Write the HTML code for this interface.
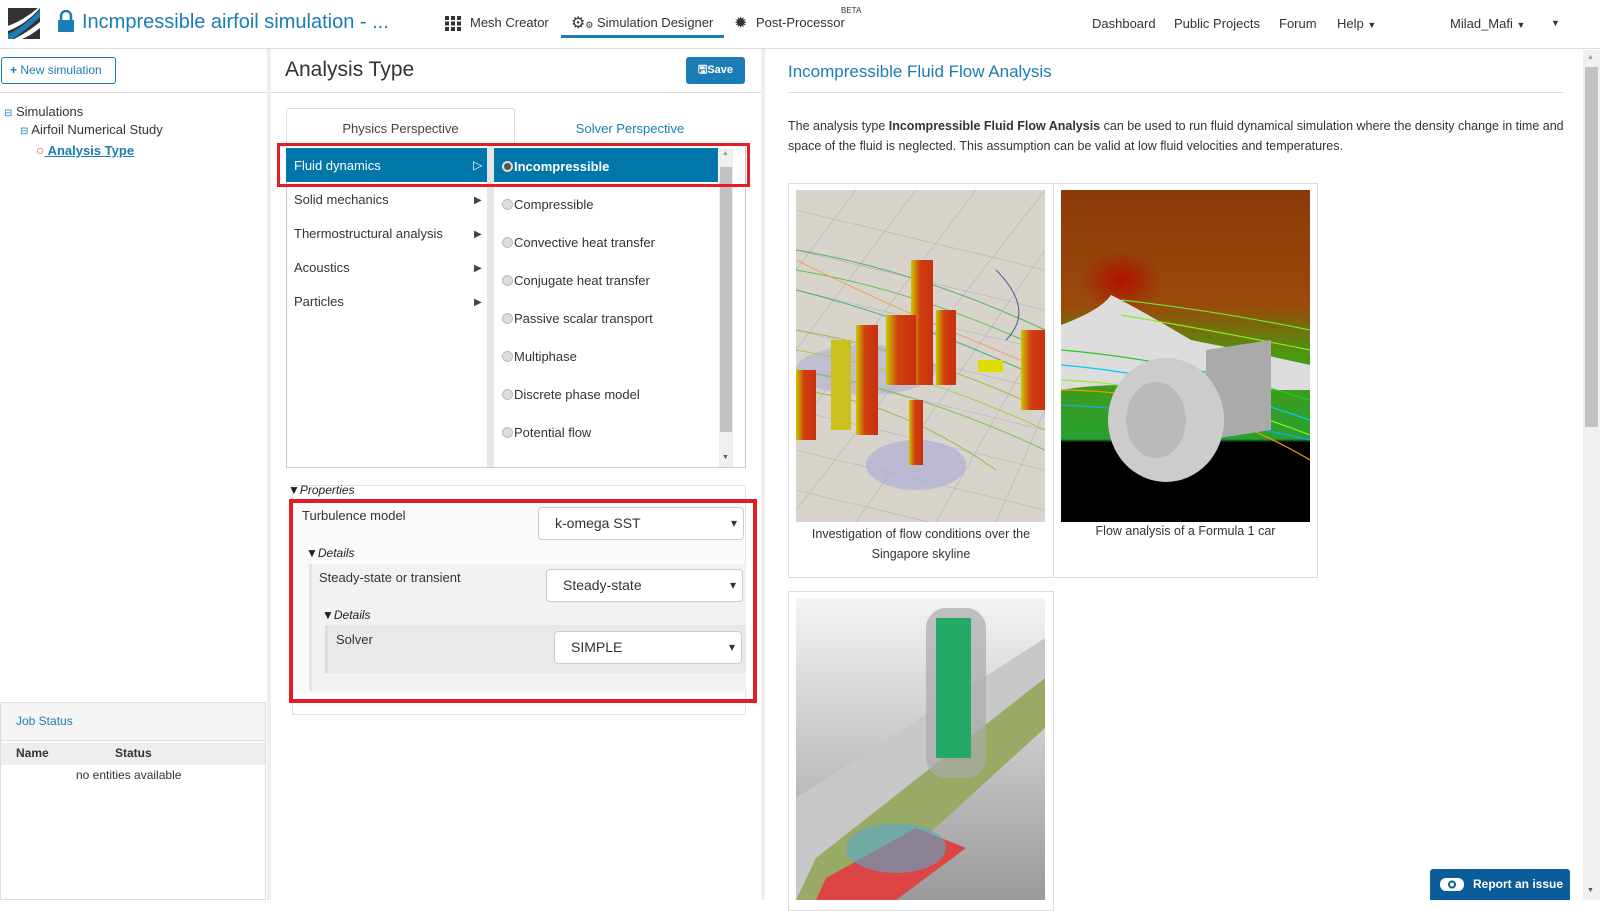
<!DOCTYPE html>
<html><head><meta charset="utf-8"><style>
*{box-sizing:border-box;margin:0;padding:0}
body{width:1600px;height:900px;position:relative;overflow:hidden;background:#fff;font-family:"Liberation Sans",sans-serif;color:#333;font-size:13px}
.a{position:absolute;white-space:nowrap}
.blue{color:#1b7db5}
.sel{position:absolute;border:1px solid #ccc;border-radius:4px;background:#fff;font-size:14px;padding-left:16px;line-height:30px;color:#333}
.sel:after{content:"▾";position:absolute;right:6px;top:0;font-size:12px;color:#333}
.rad{display:inline-block;width:11px;height:11px;border-radius:50%;background:#ddd;border:1px solid #bbb;vertical-align:-1px;margin-right:1px}
.li{position:absolute;left:502px;font-size:13px;color:#333}
.pl{position:absolute;left:294px;font-size:13px;color:#333}
.ar{position:absolute;left:474px;font-size:10px;color:#444}
</style></head><body>
<div class="a" style="left:0;top:0;width:1600px;height:49px;border-bottom:1px solid #ddd;background:#fff"></div>
<svg class="a" style="left:8px;top:8px" width="32" height="31"><rect width="32" height="31" fill="#333"/><path d="M0 26 Q14 20 32 2 L32 9 Q16 24 4 31 L0 31Z" fill="#1b7db5"/><path d="M6 31 Q20 24 32 14 L32 20 Q22 28 14 31Z" fill="#fff"/><path d="M0 18 Q16 12 30 0 L32 0 Q18 16 0 23Z" fill="#fff"/></svg>
<svg class="a" style="left:57px;top:10px" width="18" height="22"><path d="M4 10 V6 a5 5 0 0 1 10 0 V10" stroke="#1b7db5" stroke-width="2.5" fill="none"/><rect x="1" y="10" width="16" height="12" rx="1" fill="#1b7db5"/></svg>
<div class="a blue" style="left:82px;top:11px;font-size:20px">Incmpressible airfoil simulation - ...</div>
<svg class="a" style="left:445px;top:16px" width="16" height="15" fill="#333"><rect x="0" y="0" width="4" height="4"/><rect x="6" y="0" width="4" height="4"/><rect x="12" y="0" width="4" height="4"/><rect x="0" y="5.5" width="4" height="4"/><rect x="6" y="5.5" width="4" height="4"/><rect x="12" y="5.5" width="4" height="4"/><rect x="0" y="11" width="4" height="4"/><rect x="6" y="11" width="4" height="4"/><rect x="12" y="11" width="4" height="4"/></svg>
<div class="a" style="left:470px;top:15px;font-size:13px">Mesh Creator</div>
<div class="a" style="left:571px;top:13px;font-size:16px;color:#333">⚙<span style="font-size:9px">⚙</span></div>
<div class="a" style="left:597px;top:15px;font-size:13px">Simulation Designer</div>
<div class="a" style="left:561px;top:35px;width:163px;height:3px;background:#1b7db5"></div>
<div class="a" style="left:734px;top:13px;font-size:16px;color:#333">✹</div>
<div class="a" style="left:756px;top:15px;font-size:13px">Post-Processor</div>
<div class="a" style="left:841px;top:6px;font-size:8px">BETA</div>
<div class="a" style="left:1092px;top:16px;font-size:13px">Dashboard</div>
<div class="a" style="left:1174px;top:16px;font-size:13px">Public Projects</div>
<div class="a" style="left:1279px;top:16px;font-size:13px">Forum</div>
<div class="a" style="left:1337px;top:16px;font-size:13px">Help <span style="font-size:9px">▼</span></div>
<div class="a" style="left:1450px;top:16px;font-size:13px">Milad_Mafi <span style="font-size:9px">▼</span></div>
<div class="a" style="left:1551px;top:18px;font-size:9px">▼</div>
<div class="a" style="left:267px;top:49px;width:4px;height:851px;background:#eee"></div>
<div class="a" style="left:761px;top:49px;width:4px;height:851px;background:#eee"></div>
<div class="a blue" style="left:1px;top:57px;width:115px;height:27px;border:1px solid #1b7db5;border-radius:3px;font-size:12px;line-height:25px;padding-left:8px"><b>+</b> New simulation</div>
<div class="a" style="left:0;top:92px;width:267px;height:1px;background:#ddd"></div>
<div class="a" style="left:4px;top:104px;font-size:13px"><span class="blue" style="font-size:10px">⊟</span> Simulations</div>
<div class="a" style="left:20px;top:122px;font-size:13px"><span class="blue" style="font-size:10px">⊟</span> Airfoil Numerical Study</div>
<div class="a" style="left:36px;top:142px;font-size:13px"><span style="color:#e8502a;font-size:14px">○</span><span class="blue" style="text-decoration:underline;font-weight:bold"> Analysis Type</span></div>
<div class="a" style="left:0;top:702px;width:266px;height:198px;border:1px solid #ddd"></div>
<div class="a" style="left:1px;top:703px;width:264px;height:38px;background:#f5f5f5;border-bottom:1px solid #ddd"></div>
<div class="a blue" style="left:16px;top:714px;font-size:12px">Job Status</div>
<div class="a" style="left:1px;top:743px;width:264px;height:22px;background:#eee"></div>
<div class="a" style="left:16px;top:746px;font-size:12px;font-weight:bold">Name</div>
<div class="a" style="left:115px;top:746px;font-size:12px;font-weight:bold">Status</div>
<div class="a" style="left:76px;top:768px;font-size:12px">no entities available</div>
<div class="a" style="left:285px;top:58px;font-size:21px;color:#333">Analysis Type</div>
<div class="a" style="left:686px;top:57px;width:59px;height:27px;background:#1b7db5;border-radius:3px;color:#fff;font-size:11px;font-weight:bold;line-height:27px;text-align:center">🖫Save</div>
<div class="a" style="left:271px;top:92px;width:490px;height:1px;background:#ddd"></div>
<div class="a" style="left:286px;top:108px;width:229px;height:36px;border:1px solid #ddd;border-bottom:none;border-radius:3px 3px 0 0;background:#fff"></div>
<div class="a" style="left:286px;top:121px;width:229px;text-align:center;font-size:13px;color:#444">Physics Perspective</div>
<div class="a blue" style="left:515px;top:121px;width:230px;text-align:center;font-size:13px">Solver Perspective</div>
<div class="a" style="left:286px;top:143px;width:460px;height:325px;border:1px solid #ccc;background:#fff"></div>
<div class="a" style="left:487px;top:144px;width:7px;height:323px;background:#e6e6e6"></div>
<div class="a" style="left:719px;top:148px;width:14px;height:319px;background:#f0f0f0"></div>
<div class="a" style="left:720px;top:167px;width:12px;height:265px;background:#c2c2c2"></div>
<div class="a" style="left:722px;top:150px;font-size:7px;color:#999">▲</div>
<div class="a" style="left:722px;top:454px;font-size:7px;color:#555">▼</div>
<div class="a" style="left:286px;top:148px;width:201px;height:34px;background:#0077a8"></div>
<div class="a" style="left:294px;top:158px;color:#fff;font-size:13px">Fluid dynamics</div>
<div class="a" style="left:473px;top:158px;color:#fff;font-size:12px">▷</div>
<div class="a" style="left:494px;top:148px;width:224px;height:34px;background:#0077a8"></div>
<div class="a" style="left:502px;top:159px;color:#fff;font-size:13px;font-weight:bold"><span class="rad" style="background:#555;border:2px solid #ddd"></span>Incompressible</div>
<div class="pl" style="top:192px">Solid mechanics</div><div class="ar" style="top:195px">▶</div>
<div class="pl" style="top:226px">Thermostructural analysis</div><div class="ar" style="top:229px">▶</div>
<div class="pl" style="top:260px">Acoustics</div><div class="ar" style="top:263px">▶</div>
<div class="pl" style="top:294px">Particles</div><div class="ar" style="top:297px">▶</div>
<div class="li" style="top:197px"><span class="rad"></span>Compressible</div>
<div class="li" style="top:235px"><span class="rad"></span>Convective heat transfer</div>
<div class="li" style="top:273px"><span class="rad"></span>Conjugate heat transfer</div>
<div class="li" style="top:311px"><span class="rad"></span>Passive scalar transport</div>
<div class="li" style="top:349px"><span class="rad"></span>Multiphase</div>
<div class="li" style="top:387px"><span class="rad"></span>Discrete phase model</div>
<div class="li" style="top:425px"><span class="rad"></span>Potential flow</div>
<div class="a" style="left:277px;top:143px;width:473px;height:44px;border:3px solid #e41c24"></div>
<div class="a" style="left:292px;top:485px;width:454px;height:230px;border:1px solid #e2e2e2;background:#fff"></div>
<div class="a" style="left:288px;top:483px;font-size:12px;font-style:italic;color:#222">▼Properties</div>
<div class="a" style="left:293px;top:503px;width:452px;height:190px;background:#fafafa"></div>
<div class="a" style="left:302px;top:508px;font-size:13px">Turbulence model</div>
<div class="sel" style="left:538px;top:507px;width:206px;height:33px">k-omega SST</div>
<div class="a" style="left:306px;top:546px;font-size:12px;font-style:italic;color:#222">▼Details</div>
<div class="a" style="left:309px;top:564px;width:437px;height:127px;background:#f2f2f2;border-left:3px solid #e4e4e4"></div>
<div class="a" style="left:319px;top:570px;font-size:13px">Steady-state or transient</div>
<div class="sel" style="left:546px;top:569px;width:197px;height:33px">Steady-state</div>
<div class="a" style="left:322px;top:608px;font-size:12px;font-style:italic;color:#222">▼Details</div>
<div class="a" style="left:325px;top:625px;width:421px;height:48px;background:#e9e9e9;border-left:3px solid #dedede"></div>
<div class="a" style="left:336px;top:632px;font-size:13px">Solver</div>
<div class="sel" style="left:554px;top:631px;width:188px;height:33px">SIMPLE</div>
<div class="a" style="left:289px;top:499px;width:468px;height:204px;border:4px solid #e41c24"></div>
<div class="a blue" style="left:788px;top:62px;font-size:17px">Incompressible Fluid Flow Analysis</div>
<div class="a" style="left:788px;top:92px;width:775px;height:1px;background:#ddd"></div>
<div class="a" style="left:788px;top:116px;font-size:12.5px;line-height:20px;width:780px;white-space:normal">The analysis type <b>Incompressible Fluid Flow Analysis</b> can be used to run fluid dynamical simulation where the density change in time and space of the fluid is neglected. This assumption can be valid at low fluid velocities and temperatures.</div>
<div class="a" style="left:788px;top:183px;width:266px;height:395px;border:1px solid #ddd"></div>
<div class="a" style="left:1053px;top:183px;width:265px;height:395px;border:1px solid #ddd"></div>
<div class="a" style="left:788px;top:591px;width:266px;height:320px;border:1px solid #ddd"></div>
<svg class="a" style="left:796px;top:190px" width="249" height="332">
<defs><linearGradient id="b" x1="0" x2="1"><stop offset="0" stop-color="#c9c900"/><stop offset=".4" stop-color="#d04010"/><stop offset="1" stop-color="#c83010"/></linearGradient></defs>
<rect width="249" height="332" fill="#d8d4cb"/>
<g stroke="#a9a6c8" stroke-width=".6" opacity=".8"><path d="M0 20 L249 80 M0 60 L249 120 M0 100 L249 160 M0 140 L249 200 M0 180 L249 240 M0 220 L249 280 M0 260 L249 320 M0 300 L249 360 M60 0 L0 80 M120 0 L0 160 M180 0 L0 240 M249 0 L0 320 M249 60 L60 332 M249 140 L140 332 M249 220 L200 332"/></g>
<ellipse cx="120" cy="275" rx="50" ry="25" fill="#aaa8d8" opacity=".6"/><ellipse cx="70" cy="180" rx="70" ry="25" fill="#aaa8d8" opacity=".5"/>
<g fill="none" stroke-width="1" opacity=".8"><path d="M0 60 Q120 80 249 140" stroke="#3a4"/><path d="M0 80 Q120 100 249 160" stroke="#4b3"/><path d="M0 100 Q120 130 249 190" stroke="#2a6"/><path d="M0 140 Q120 160 249 220" stroke="#8b2"/><path d="M0 160 Q120 180 249 240" stroke="#9c3"/><path d="M0 180 Q120 200 249 260" stroke="#6b3"/><path d="M0 200 Q100 210 200 280" stroke="#7b2"/><path d="M0 70 Q100 120 249 180" stroke="#e94"/><path d="M200 80 Q240 120 210 150" stroke="#248"/></g>
<rect x="115" y="70" width="22" height="125" fill="url(#b)"/><rect x="90" y="125" width="30" height="70" fill="url(#b)"/><rect x="140" y="120" width="20" height="75" fill="url(#b)"/><rect x="60" y="135" width="22" height="110" fill="url(#b)"/><rect x="35" y="150" width="20" height="90" fill="#ccc020"/><rect x="0" y="180" width="20" height="70" fill="url(#b)"/><rect x="113" y="210" width="14" height="65" fill="url(#b)"/><rect x="225" y="140" width="24" height="80" fill="url(#b)"/><rect x="182" y="170" width="25" height="12" fill="#dd0"/>
</svg>
<svg class="a" style="left:1061px;top:190px" width="249" height="332">
<defs><linearGradient id="r" x1="0" y1="0" x2="0" y2="1"><stop offset="0" stop-color="#8a3a08"/><stop offset=".35" stop-color="#9a4a0a"/><stop offset=".5" stop-color="#4a9a10"/><stop offset=".75" stop-color="#28a030"/><stop offset=".76" stop-color="#000"/><stop offset="1" stop-color="#000"/></linearGradient><radialGradient id="hot" cx=".5" cy=".5" r=".5"><stop offset="0" stop-color="#b01000"/><stop offset="1" stop-color="#b01000" stop-opacity="0"/></radialGradient></defs>
<rect width="249" height="332" fill="url(#r)"/>
<ellipse cx="60" cy="90" rx="40" ry="30" fill="url(#hot)"/>
<path d="M0 135 Q40 120 50 105 Q80 120 130 150 L180 160 L249 175 L249 200 L120 200 Q60 190 0 200Z" fill="#ddd"/>
<g fill="none" stroke-width="1.2"><path d="M0 160 Q120 170 249 210" stroke="#2c2"/><path d="M0 175 Q120 185 249 230" stroke="#0cf"/><path d="M0 190 Q120 195 249 245" stroke="#9e2"/><path d="M0 200 Q130 200 249 270" stroke="#e90"/><path d="M60 110 Q150 120 249 140" stroke="#6e3"/><path d="M60 125 Q150 140 249 160" stroke="#8e2"/><path d="M0 215 Q120 220 249 250" stroke="#1ae"/></g>
<polygon points="145,160 210,150 210,240 145,250" fill="#aaa"/>
<ellipse cx="105" cy="230" rx="58" ry="62" fill="#ccc"/><ellipse cx="95" cy="230" rx="30" ry="38" fill="#bbb"/>
</svg>
<svg class="a" style="left:796px;top:598px" width="249" height="302">
<defs><linearGradient id="g3" x1="0" y1="0" x2="0" y2="1"><stop offset="0" stop-color="#f4f4f4"/><stop offset="1" stop-color="#9a9a9a"/></linearGradient></defs>
<rect width="249" height="302" fill="url(#g3)"/>
<polygon points="0,200 249,40 249,130 20,302 0,302" fill="#c8c8c8"/>
<polygon points="20,260 249,80 249,130 60,302 0,302" fill="#9a6"/>
<polygon points="30,280 120,230 170,250 100,302 20,302" fill="#d44"/>
<ellipse cx="100" cy="250" rx="50" ry="25" fill="#5ac" opacity=".6"/>
<rect x="130" y="10" width="60" height="170" rx="20" fill="#aaa" opacity=".7"/>
<rect x="140" y="20" width="35" height="140" fill="#2a6"/>
</svg>
<div class="a" style="left:788px;top:524px;width:266px;text-align:center;font-size:12.5px;line-height:20px;white-space:normal">Investigation of flow conditions over the Singapore skyline</div>
<div class="a" style="left:1053px;top:524px;width:265px;text-align:center;font-size:12.5px">Flow analysis of a Formula 1 car</div>
<div class="a" style="left:1583px;top:50px;width:17px;height:850px;background:#f0f0f0"></div>
<div class="a" style="left:1585px;top:67px;width:13px;height:360px;background:#c2c2c2"></div>
<div class="a" style="left:1587px;top:54px;font-size:7px;color:#999">▲</div>
<div class="a" style="left:1587px;top:887px;font-size:7px;color:#555">▼</div>
<div class="a" style="left:1430px;top:869px;width:140px;height:31px;background:#0b5d99;border-radius:3px 3px 0 0;color:#fff;font-size:12px;font-weight:bold;line-height:31px;padding-left:43px">Report an issue</div>
<svg class="a" style="left:1440px;top:877px" width="25" height="16"><rect x="0" y="1" width="24" height="13" rx="6" fill="#fff"/><circle cx="12" cy="7.5" r="4" fill="#0b5d99"/><circle cx="12" cy="7.5" r="2" fill="#fff"/></svg>
</body></html>
